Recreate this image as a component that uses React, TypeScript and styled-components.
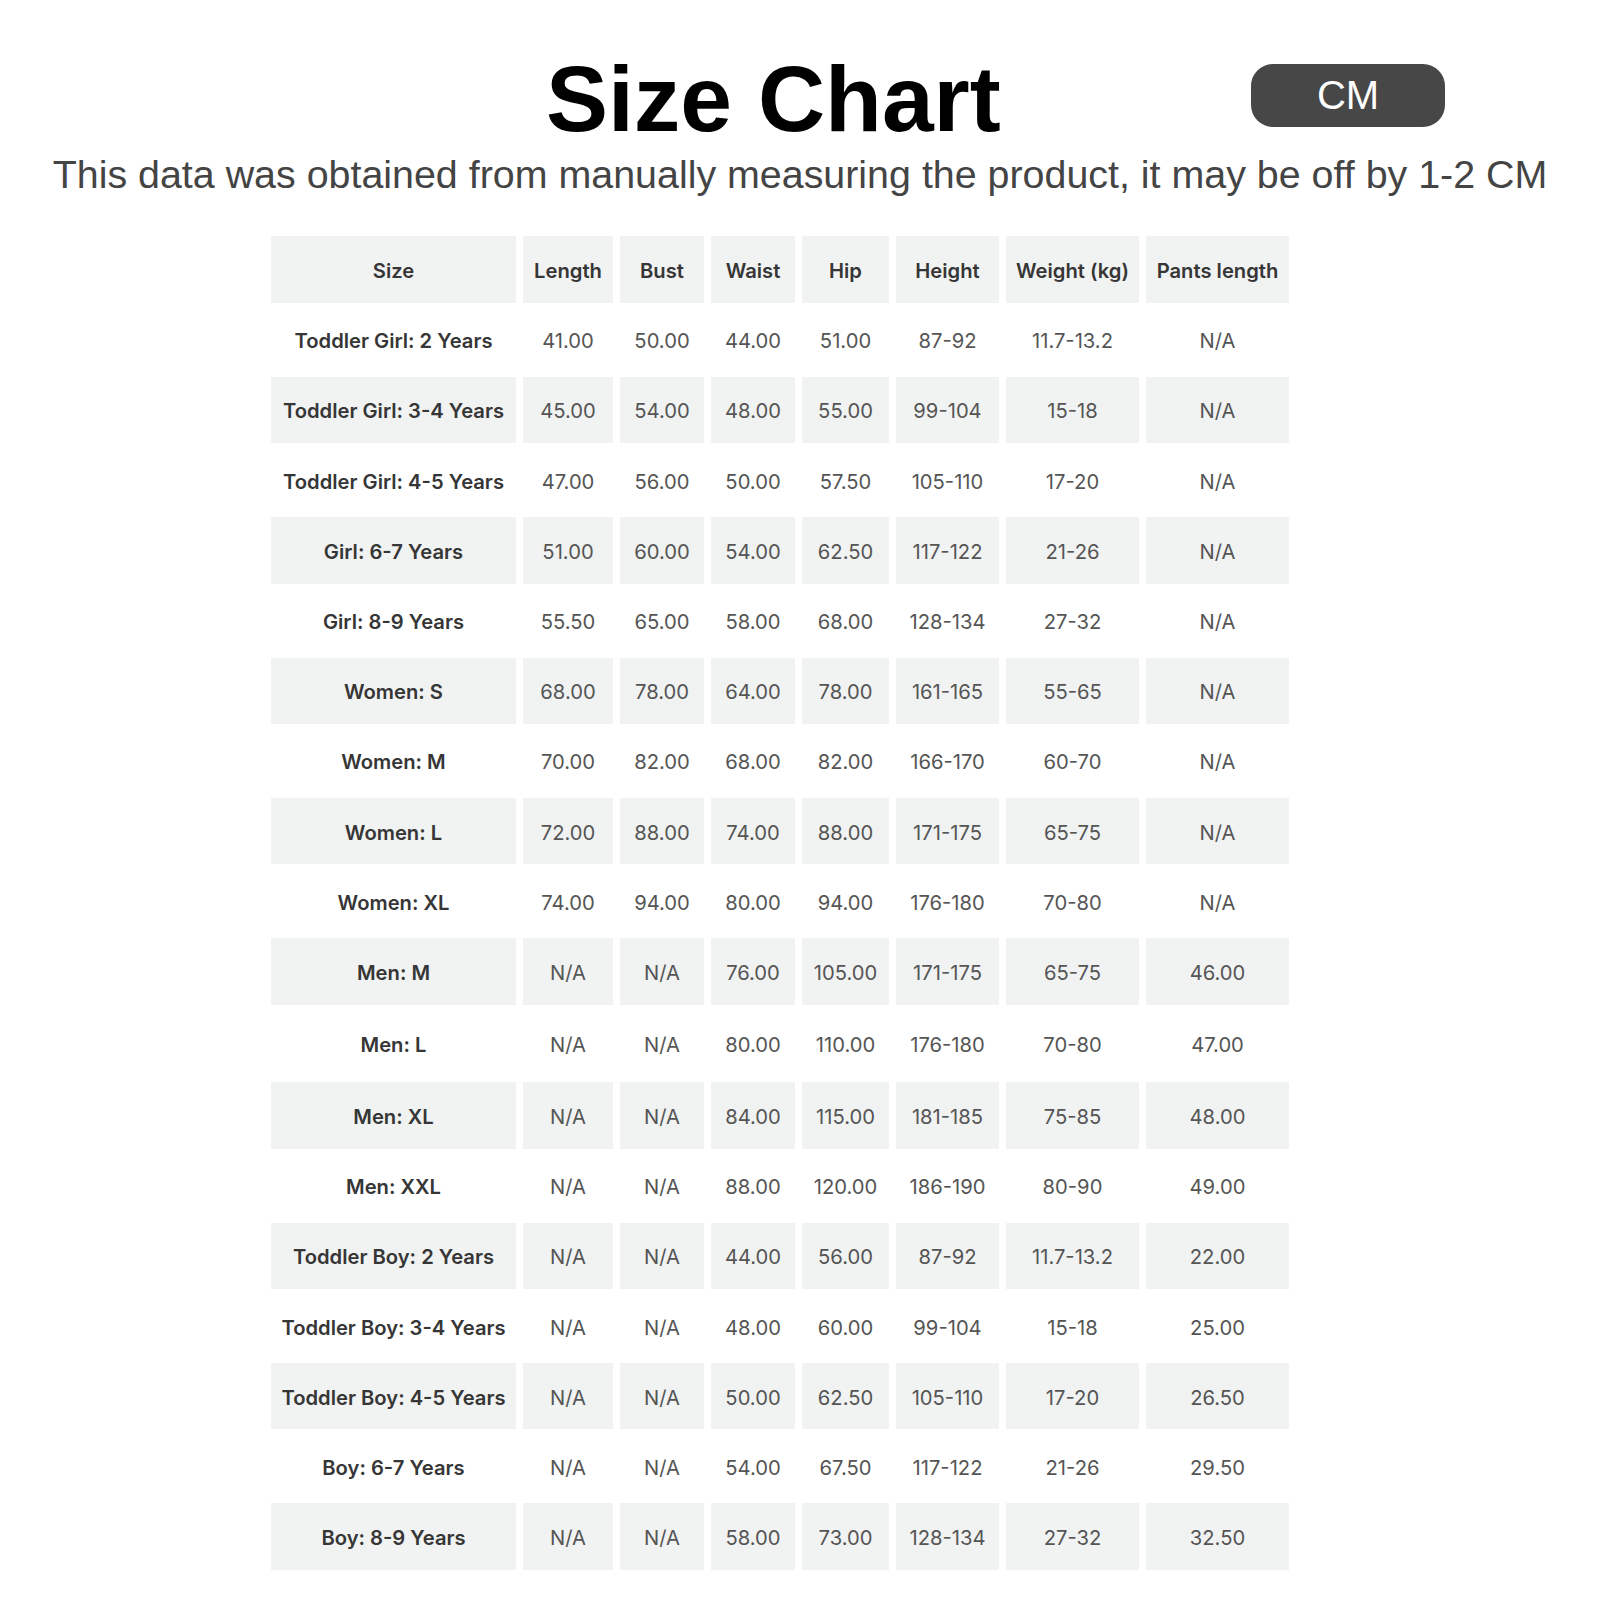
import React from 'react';
import styled, { createGlobalStyle } from 'styled-components';

const GlobalStyle = createGlobalStyle`
  body {
    margin: 0;
    background: #ffffff;
  }
`;

const headers = ['Size', 'Length', 'Bust', 'Waist', 'Hip', 'Height', 'Weight (kg)', 'Pants length'];

const rows: string[][] = [
  ['Toddler Girl: 2 Years', '41.00', '50.00', '44.00', '51.00', '87-92', '11.7-13.2', 'N/A'],
  ['Toddler Girl: 3-4 Years', '45.00', '54.00', '48.00', '55.00', '99-104', '15-18', 'N/A'],
  ['Toddler Girl: 4-5 Years', '47.00', '56.00', '50.00', '57.50', '105-110', '17-20', 'N/A'],
  ['Girl: 6-7 Years', '51.00', '60.00', '54.00', '62.50', '117-122', '21-26', 'N/A'],
  ['Girl: 8-9 Years', '55.50', '65.00', '58.00', '68.00', '128-134', '27-32', 'N/A'],
  ['Women: S', '68.00', '78.00', '64.00', '78.00', '161-165', '55-65', 'N/A'],
  ['Women: M', '70.00', '82.00', '68.00', '82.00', '166-170', '60-70', 'N/A'],
  ['Women: L', '72.00', '88.00', '74.00', '88.00', '171-175', '65-75', 'N/A'],
  ['Women: XL', '74.00', '94.00', '80.00', '94.00', '176-180', '70-80', 'N/A'],
  ['Men: M', 'N/A', 'N/A', '76.00', '105.00', '171-175', '65-75', '46.00'],
  ['Men: L', 'N/A', 'N/A', '80.00', '110.00', '176-180', '70-80', '47.00'],
  ['Men: XL', 'N/A', 'N/A', '84.00', '115.00', '181-185', '75-85', '48.00'],
  ['Men: XXL', 'N/A', 'N/A', '88.00', '120.00', '186-190', '80-90', '49.00'],
  ['Toddler Boy: 2 Years', 'N/A', 'N/A', '44.00', '56.00', '87-92', '11.7-13.2', '22.00'],
  ['Toddler Boy: 3-4 Years', 'N/A', 'N/A', '48.00', '60.00', '99-104', '15-18', '25.00'],
  ['Toddler Boy: 4-5 Years', 'N/A', 'N/A', '50.00', '62.50', '105-110', '17-20', '26.50'],
  ['Boy: 6-7 Years', 'N/A', 'N/A', '54.00', '67.50', '117-122', '21-26', '29.50'],
  ['Boy: 8-9 Years', 'N/A', 'N/A', '58.00', '73.00', '128-134', '27-32', '32.50'],
];

const Page = styled.div`
  width: 1600px;
  min-height: 1600px;
  display: flex;
  flex-direction: column;
  font-family: 'Liberation Sans', Arial, sans-serif;
`;

const Header = styled.header`
  display: flex;
  align-items: flex-start;
  justify-content: space-between;
  margin-top: 53px;
  padding: 0 155px 0 546px;
`;

const Title = styled.h1`
  margin: 0;
  font-size: 93px;
  line-height: 1;
  font-weight: 700;
  color: #000;
`;

const UnitPill = styled.div`
  margin-top: 11px;
  width: 194px;
  height: 63px;
  border-radius: 22px;
  background: #474747;
  color: #fff;
  font-size: 40px;
  display: flex;
  align-items: center;
  justify-content: center;
`;

const Note = styled.p`
  margin: 9px 0 0;
  font-size: 39.4px;
  line-height: 1;
  color: #444;
  text-align: center;
`;

const Table = styled.div`
  margin: 42px 0 0 271px;
  display: flex;
  flex-direction: column;
  gap: 3.8px;
  font-family: Inter, 'Noto Sans', sans-serif;
`;

const Row = styled.div<{ $tall?: boolean }>`
  display: grid;
  grid-template-columns: 245px 90px 84px 84px 87px 103px 133px 143px;
  column-gap: 7px;
  height: ${(p) => (p.$tall ? '70px' : '66.4px')};
`;

const Cell = styled.div<{ $shaded?: boolean; $strong?: boolean }>`
  display: flex;
  align-items: center;
  justify-content: center;
  padding-top: 2px;
  background: ${(p) => (p.$shaded ? '#f1f2f2' : 'transparent')};
  font-size: 20.2px;
  font-weight: ${(p) => (p.$strong ? 600 : 400)};
  color: ${(p) => (p.$strong ? '#363636' : '#555555')};
  white-space: nowrap;
`;

function App() {
  return (
    <Page>
      <GlobalStyle />
      <Header>
        <Title>Size Chart</Title>
        <UnitPill>CM</UnitPill>
      </Header>
      <Note>This data was obtained from manually measuring the product, it may be off by 1-2 CM</Note>

      <Table>
        <Row>
          {headers.map((h) => (
            <Cell key={h} $shaded $strong>
              {h}
            </Cell>
          ))}
        </Row>
        {rows.map((r, i) => (
          <Row key={r[0]} $tall={r[0] === 'Men: L'}>
            {r.map((v, j) => (
              <Cell key={j} $shaded={i % 2 === 1} $strong={j === 0}>
                {v}
              </Cell>
            ))}
          </Row>
        ))}
      </Table>
    </Page>
  );
}

export default App;
